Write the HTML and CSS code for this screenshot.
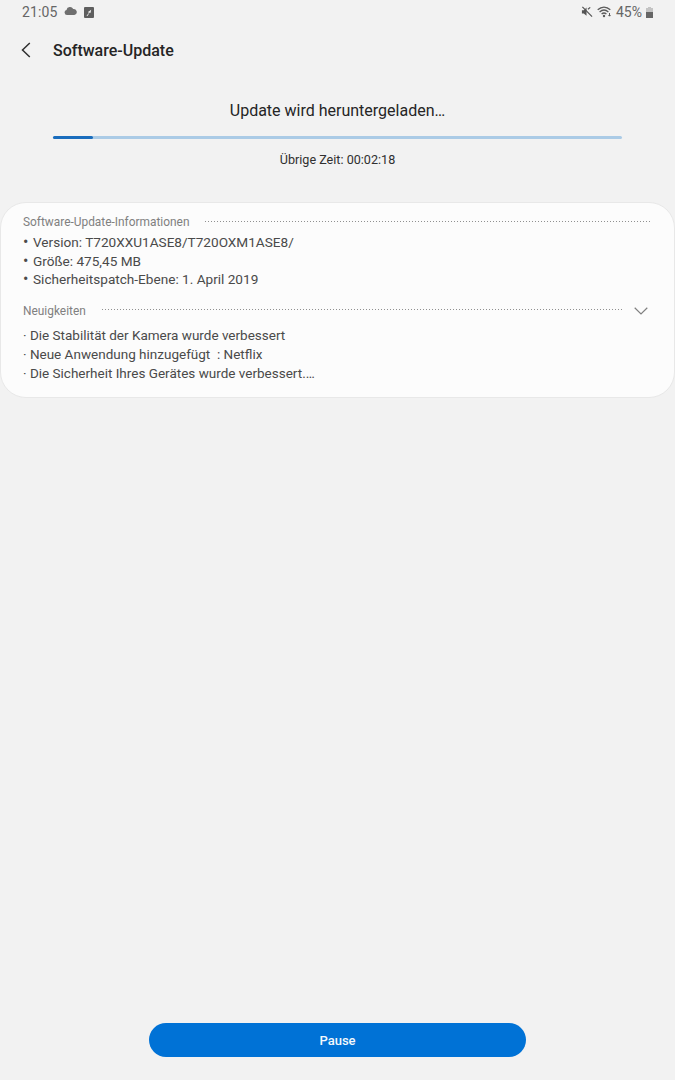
FILE: index.html
```html
<!DOCTYPE html>
<html lang="de">
<head>
  <meta charset="UTF-8" />
  <meta name="viewport" content="width=device-width, initial-scale=1.0"/>
  <title>Software-Update</title>
  <link rel="stylesheet" href="styles.css">
</head>
<body>
  <div class="screen">
    <div class="status-bar">
      <div class="status-left">
        <span class="clock">21:05</span>
        <svg class="cloud" width="13" height="8" viewBox="0 0 13 8"><path d="M3 8a2.6 2.6 0 0 1-.5-5.1A3.6 3.6 0 0 1 9.2 2 3 3 0 0 1 10.300 8z" fill="#6f6f6f"/></svg>
        <svg class="note" width="10" height="11" viewBox="0 0 10 11"><rect width="10" height="11" rx="1" fill="#5f5f5f"/><path d="M2.500 8.500 5 6l-1-1 3.200-2.200L6.500 6l-.8-.4L3.500 9z" fill="#f2f2f2"/></svg>
      </div>
      <div class="status-right">
        <svg width="12" height="12" viewBox="0 0 13 12"><path d="M1 4h2l3-3v9L3 7.500H1z" fill="#555"/><path d="M7.500 3 10 1M1.500.5l10.500 10.500" stroke="#555" stroke-width="1.300" fill="none"/></svg>
        <svg class="wifi" width="15" height="12" viewBox="0 0 15 12"><path d="M.7 3.800C4.500.4 9.500.4 13.300 3.800M2.600 5.900c2.800-2.400 6-2.400 8.800 0M4.600 8c1.600-1.300 3.200-1.300 4.800 0" stroke="#5a5a5a" stroke-width="1.300" fill="none"/><circle cx="7" cy="10" r="1.200" fill="#5a5a5a"/><path d="M12.500 7v3M11.500 9l1 1.200 1-1.200" stroke="#5a5a5a" fill="none"/></svg>
        <span class="percent">45%</span>
        <span class="battery"><span class="battery-level"></span></span>
      </div>
    </div>

    <div class="title-bar">
      <svg class="back" width="10" height="16" viewBox="0 0 10 16"><path d="M8.800 1 1.500 8l7.300 7" stroke="#303030" stroke-width="1.500" fill="none"/></svg>
      <h1>Software-Update</h1>
    </div>

    <div class="progress-area">
      <p class="progress-title">Update wird heruntergeladen…</p>
      <div class="progress-track"><div class="progress-fill"></div></div>
      <p class="progress-time">Übrige Zeit: 00:02:18</p>
    </div>

    <div class="info-card">
      <div class="section-head">
        <span>Software-Update-Informationen</span>
        <span class="dots"></span>
      </div>
      <ul class="info-list">
        <li>Version: T720XXU1ASE8/T720OXM1ASE8/</li>
        <li>Größe: 475,45 MB</li>
        <li>Sicherheitspatch-Ebene: 1. April 2019</li>
      </ul>
      <div class="section-head news-head">
        <span>Neuigkeiten</span>
        <span class="dots"></span>
        <svg class="chevron" width="14" height="8" viewBox="0 0 14 8"><path d="M.7.8 7 7 13.300.8" stroke="#808080" stroke-width="1.200" fill="none"/></svg>
      </div>
      <div class="news-list">
        <p>· Die Stabilität der Kamera wurde verbessert</p>
        <p>· Neue Anwendung hinzugefügt&nbsp; : Netflix</p>
        <p>· Die Sicherheit Ihres Gerätes wurde verbessert.…</p>
      </div>
    </div>

    <div class="footer">
      <button class="pause-btn">Pause</button>
    </div>
  </div>
</body>
</html>
```

FILE: styles.css
```css
html, body {
  margin: 0;
  padding: 0;
}
body {
  font-family: Roboto, 'Noto Sans', sans-serif;
  background: #f2f2f2;
}
.screen {
  height: 1080px;
  display: flex;
  flex-direction: column;
  overflow: hidden;
}
.status-bar {
  height: 24px;
  padding: 0 22px 0 22px;
  display: flex;
  justify-content: space-between;
  align-items: center;
  color: #666;
}
.status-left, .status-right {
  display: flex;
  align-items: center;
}
.clock {
  font-size: 14px;
  letter-spacing: 0.15px;
}
.cloud {
  margin-left: 6px;
  margin-bottom: 2px;
}
.note {
  margin-left: 7px;
}
.wifi {
  margin-left: 4px;
}
.percent {
  font-size: 14px;
  margin-left: 4px;
}
.battery {
  width: 7px;
  height: 10px;
  margin-left: 4px;
  margin-top: 1px;
  background: #c4c4c4;
  display: flex;
  align-items: flex-end;
  position: relative;
}
.battery::before {
  content: "";
  position: absolute;
  top: -1px;
  left: 2px;
  width: 3px;
  height: 1px;
  background: #c4c4c4;
}
.battery-level {
  display: block;
  width: 100%;
  height: 6px;
  background: #666;
}
.title-bar {
  height: 52px;
  display: flex;
  align-items: center;
  padding-left: 21px;
}
.back {
  margin-right: 22px;
}
h1 {
  margin: 0;
  font-size: 16px;
  font-weight: 500;
  color: #252525;
}
.progress-area {
  padding: 0 53px;
  text-align: center;
}
.progress-title {
  margin: 25px 0 0;
  font-size: 16px;
  line-height: 20px;
  color: #252525;
}
.progress-track {
  height: 3px;
  margin-top: 15px;
  background: #abcbe6;
  border-radius: 2px;
}
.progress-fill {
  width: 40px;
  height: 3px;
  background: #1a6dbd;
  border-radius: 2px;
}
.progress-time {
  margin: 13px 0 0;
  font-size: 12.600px;
  line-height: 16px;
  color: #303030;
}
.info-card {
  margin-top: 34px;
  height: 196px;
  box-sizing: border-box;
  padding: 11px 22px 0;
  background: #fcfcfc;
  border: 1px solid #e8e8e8;
  border-radius: 26px;
}
.section-head {
  display: flex;
  align-items: center;
  height: 16px;
  font-size: 11.900px;
  color: #808080;
}
.dots {
  flex: 1;
  height: 1px;
  margin: 0 0 2px 16px;
  background: linear-gradient(to right, #909090 1px, transparent 1px) 0 0 / 3px 1px repeat-x;
}
.info-list {
  list-style: none;
  margin: 3px 0 0;
  padding: 0;
  font-size: 13.600px;
  line-height: 18.500px;
  color: #4a4a4a;
}
.info-list li {
  padding-left: 10px;
  position: relative;
}
.info-list li::before {
  content: "•";
  position: absolute;
  left: 0;
  font-size: 16px;
}
.news-head {
  margin-top: 14px;
}
.chevron {
  margin-left: 12px;
  margin-right: 4px;
}
.news-list {
  margin-top: 7px;
  font-size: 13.500px;
  line-height: 19px;
  color: #4a4a4a;
}
.news-list p {
  margin: 0;
}
.footer {
  margin-top: auto;
  padding-bottom: 23px;
  display: flex;
  justify-content: center;
}
.pause-btn {
  width: 377px;
  height: 34px;
  border: none;
  border-radius: 17px;
  background: #0072d6;
  color: #f4f8fc;
  font-family: inherit;
  font-size: 13px;
  font-weight: 500;
}
```
